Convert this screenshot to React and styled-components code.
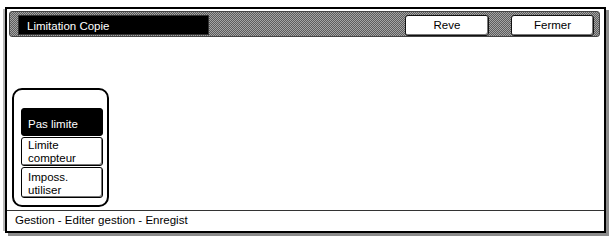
import React from 'react';
import styled, { createGlobalStyle } from 'styled-components';

const GlobalStyle = createGlobalStyle`
  html, body {
    margin: 0;
    padding: 0;
    background: #fff;
    font-family: "Liberation Sans", Arial, sans-serif;
  }
`

const dither = `repeating-conic-gradient(#5c5c5c 0 25%, #a4a4a4 0 50%) 0 0 / 2px 2px`

const Page = styled.div`
  width: 614px;
  height: 240px;
  padding: 7px 0 0 5px;
  box-sizing: border-box;
`

const Frame = styled.div`
  width: 601px;
  height: 226px;
  box-sizing: border-box;
  border: 2px solid #000;
  display: flex;
  flex-direction: column;
  box-shadow: 3px 3px 0 #8c8c8c, -4px 0 0 -2px #b8b8b8;
`

const Header = styled.div`
  margin: 2px 4px 0 2px;
  height: 26px;
  box-sizing: border-box;
  padding: 3px 5px 0 8px;
  border: 1px solid #444;
  border-radius: 3px;
  background: ${dither};
  display: flex;
  align-items: flex-start;
`

const TitleBox = styled.div`
  width: 191px;
  height: 20px;
  box-sizing: border-box;
  background: #000;
  color: #fff;
  font-size: 11.5px;
  line-height: 20px;
  padding-left: 8px;
  border: 1px solid #333;
`

const HeaderButtons = styled.div`
  margin-left: auto;
  display: flex;
  gap: 22px;
`

const TopButton = styled.div`
  width: ${props => props.w}px;
  height: 21px;
  box-sizing: border-box;
  background: #fff;
  border: 1px solid #111;
  border-radius: 3px;
  box-shadow: inset -1px -1px 0 #777;
  font-size: 11.5px;
  line-height: 19px;
  text-align: center;
  color: #000;
`

const Content = styled.div`
  flex: 1;
  padding: 51px 0 0 5px;
`

const GroupBox = styled.div`
  width: 97px;
  height: 119px;
  box-sizing: border-box;
  border: 2px solid #000;
  border-radius: 10px;
  padding: 18px 0 0 7px;
  display: flex;
  flex-direction: column;
  gap: 1px;
`

const OptionButton = styled.div`
  width: 82px;
  height: ${props => props.h}px;
  box-sizing: border-box;
  border: 1px solid #000;
  border-radius: 3px;
  background: ${props => props.active ? '#000' : '#fff'};
  color: ${props => props.active ? '#fff' : '#000'};
  box-shadow: ${props => props.active ? 'none' : 'inset -1px -1px 0 #777'};
  font-size: 11.5px;
  line-height: 13px;
  padding: 0 0 ${props => props.active ? 4 : 0}px 6px;
  display: flex;
  flex-direction: column;
  justify-content: flex-end;
`

const StatusBar = styled.div`
  height: 20px;
  border-top: 1px solid #333;
  font-size: 11.5px;
  line-height: 19px;
  padding-left: 8px;
  color: #000;
`

const options = [
  { label: ['Pas limite'], h: 28, active: true },
  { label: ['Limite', 'compteur'], h: 29 },
  { label: ['Imposs.', 'utiliser'], h: 31 },
]

const App = () => {
  return (<>
    <GlobalStyle />
    <Page>
      <Frame>
        <Header>
          <TitleBox>Limitation Copie</TitleBox>
          <HeaderButtons>
            <TopButton w={84}>Reve</TopButton>
            <TopButton w={83}>Fermer</TopButton>
          </HeaderButtons>
        </Header>
        <Content>
          <GroupBox>
            {options.map((item, index) => {
              return <OptionButton key={index} h={item.h} active={item.active}>
                {item.label.map(line => <span key={line}>{line}</span>)}
              </OptionButton>
            })}
          </GroupBox>
        </Content>
        <StatusBar>Gestion - Editer gestion - Enregist</StatusBar>
      </Frame>
    </Page>
  </>);
}

export default App;
